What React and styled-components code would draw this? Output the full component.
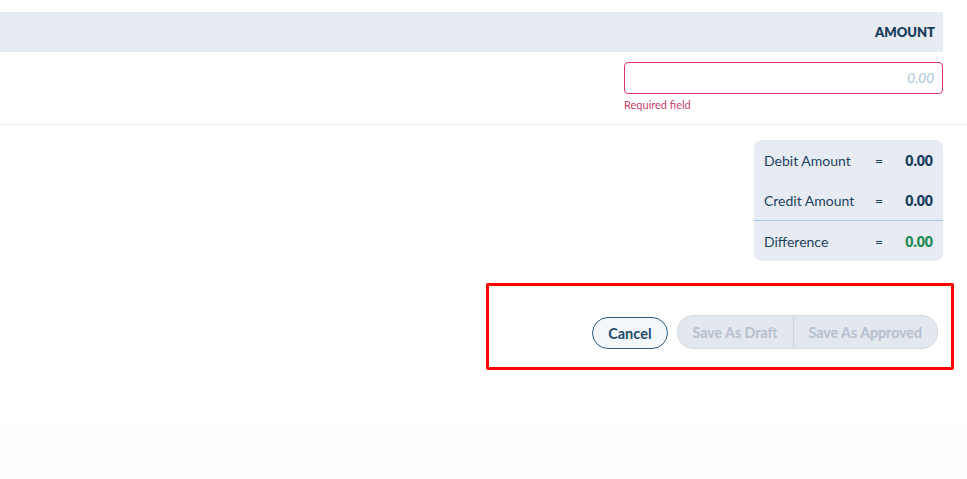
import styled, { createGlobalStyle } from "styled-components";

const GlobalStyle = createGlobalStyle`
  body {
    margin: 0;
    background: #ffffff;
    font-family: "Lato", "Open Sans", sans-serif;
    color: #1e3f5f;
  }
`;

const Page = styled.div`
  width: 967px;
  padding-top: 12px;
`;

const Section = styled.div`
  padding-right: 24px;
`;

const TableHead = styled.div`
  height: 40px;
  background: #e7ecf4;
  display: flex;
  align-items: center;
  justify-content: flex-end;
  padding-right: 8px;
  font-size: 13px;
  font-weight: 800;
  color: #1b3d5c;
`;

const FieldCell = styled.div`
  display: flex;
  flex-direction: column;
  align-items: flex-start;
  margin-left: auto;
  width: 319px;
  padding-top: 10px;
`;

const AmountInput = styled.input`
  box-sizing: border-box;
  width: 319px;
  height: 32px;
  border: 1px solid ${(p) => (p.invalid ? "#e2336c" : "#c7d2e0")};
  border-radius: 4px;
  padding: 0 8px;
  text-align: right;
  font-family: inherit;
  font-size: 13.5px;
  outline: none;
  &::placeholder {
    color: #a8c3dc;
    font-style: italic;
  }
`;

const ErrorText = styled.div`
  margin-top: 4px;
  font-size: 11px;
  color: #c8416c;
`;

const Divider = styled.hr`
  margin: 13px 0 0;
  border: none;
  border-top: 1px solid #ebe9f2;
`;

const Summary = styled.div`
  margin: 15px 0 0 auto;
  width: 189px;
  background: #e7ecf4;
  border-radius: 8px;
  overflow: hidden;
`;

const SummaryRow = styled.div`
  display: grid;
  grid-template-columns: 1fr 24px 40px;
  align-items: center;
  height: 40px;
  padding: 0 10px;
  font-size: 14px;
  border-top: ${(p) => (p.split ? "1px solid #a6cbea" : "none")};
`;

const Eq = styled.span`
  padding-left: 6px;
`;

const Value = styled.span`
  text-align: right;
  font-weight: 800;
  color: ${(p) => p.color || "#1b3d5c"};
`;

const ActionBox = styled.div`
  box-sizing: border-box;
  margin: 22px 0 0 486px;
  width: 468px;
  height: 87px;
  border: 3px solid #ff0000;
  border-radius: 2px;
  display: flex;
  justify-content: flex-end;
  align-items: flex-start;
  gap: 9px;
  padding: 29px 13px 0 0;
`;

const CancelButton = styled.button`
  height: 32px;
  margin-top: 2px;
  padding: 0 15px;
  border: 1px solid #2d5c86;
  border-radius: 16px;
  background: #f4f7fa;
  color: #1f4a70;
  font-family: inherit;
  font-size: 14.5px;
  font-weight: 700;
`;

const ButtonGroup = styled.div`
  display: flex;
  height: 32px;
  border: 1px solid #d3d9e2;
  border-radius: 16px;
  background: #e3e7ee;
  overflow: hidden;
`;

const GroupButton = styled.button`
  border: none;
  border-left: ${(p) => (p.first ? "none" : "1px solid #cfd5df")};
  background: transparent;
  padding: 0 15px;
  color: #b6c0ce;
  font-family: inherit;
  font-size: 14.2px;
  font-weight: 700;
`;

const PageFoot = styled.div`
  margin-top: 62px;
  height: 48px;
  background: #fefefe;
  box-shadow: 0 -6px 8px rgba(0, 0, 0, 0.012);
`;

export default function App() {
  return (
    <>
      <GlobalStyle />
      <Page>
        <Section>
          <TableHead>AMOUNT</TableHead>
          <FieldCell>
            <AmountInput invalid placeholder="0.00" />
            <ErrorText>Required field</ErrorText>
          </FieldCell>
        </Section>
        <Divider />
        <Section>
          <Summary>
            <SummaryRow>
              <span>Debit Amount</span>
              <Eq>=</Eq>
              <Value>0.00</Value>
            </SummaryRow>
            <SummaryRow>
              <span>Credit Amount</span>
              <Eq>=</Eq>
              <Value>0.00</Value>
            </SummaryRow>
            <SummaryRow split>
              <span>Difference</span>
              <Eq>=</Eq>
              <Value color="#238a55">0.00</Value>
            </SummaryRow>
          </Summary>
        </Section>
        <ActionBox>
          <CancelButton>Cancel</CancelButton>
          <ButtonGroup>
            <GroupButton first disabled>Save As Draft</GroupButton>
            <GroupButton disabled>Save As Approved</GroupButton>
          </ButtonGroup>
        </ActionBox>
        <PageFoot />
      </Page>
    </>
  );
}
